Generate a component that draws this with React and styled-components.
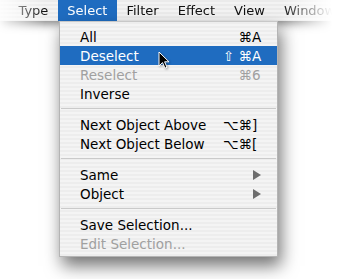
import styled, { createGlobalStyle } from "styled-components";

const GlobalStyle = createGlobalStyle`
  html, body {
    margin: 0;
    padding: 0;
    background: #fff;
  }
  body {
    font-family: "DejaVu Sans", "Liberation Sans", sans-serif;
  }
`;

const menuBarItems = ["Type", "Select", "Filter", "Effect", "View", "Window"];

const menuGroups = [
  [
    { label: "All", mods: "⌘", key: "A" },
    { label: "Deselect", mods: "⇧ ⌘", key: "A", active: true },
    { label: "Reselect", mods: "⌘", key: "6", disabled: true },
    { label: "Inverse" },
  ],
  [
    { label: "Next Object Above", mods: "⌥⌘", key: "]" },
    { label: "Next Object Below", mods: "⌥⌘", key: "[" },
  ],
  [
    { label: "Same", submenu: true },
    { label: "Object", submenu: true },
  ],
  [
    { label: "Save Selection..." },
    { label: "Edit Selection...", disabled: true },
  ],
];

const Arrow = () => (
  <svg width="12" height="19" viewBox="0 0 12 19">
    <path
      d="M1 1 L1 15 L4.5 11.6 L7 17.2 L9 16.3 L6.6 10.8 L11 10.8 Z"
      fill="#000"
      stroke="#fff"
      strokeWidth="1"
      strokeLinejoin="round"
    />
  </svg>
);

const App = () => {
  return (
    <Screen>
      <GlobalStyle />
      <BarFade>
        <MenuBar>
          {menuBarItems.map((item) => (
            <BarItem key={item} $open={item === "Select"}>
              {item}
            </BarItem>
          ))}
        </MenuBar>
      </BarFade>

      <Menu>
        {menuGroups.map((group, gi) => (
          <Group key={gi} $first={gi === 0}>
            {group.map((row) => (
              <Row key={row.label} $active={row.active} $disabled={row.disabled}>
                <Label>{row.label}</Label>
                {row.key && (
                  <Shortcut>
                    <Mods>{row.mods}</Mods>
                    <Key>{row.key}</Key>
                  </Shortcut>
                )}
                {row.submenu && <SubArrow />}
              </Row>
            ))}
          </Group>
        ))}
      </Menu>

      <Cursor>
        <Arrow />
      </Cursor>
    </Screen>
  );
};

export default App;

const Screen = styled.div`
  position: relative;
  width: 348px;
  height: 279px;
  overflow: hidden;
  background: #fff;
`;

const BarFade = styled.div`
  padding-bottom: 22px;
  -webkit-mask-image: linear-gradient(
    to right,
    rgba(0, 0, 0, 0.15) 0px,
    #000 45px,
    #000 282px,
    rgba(0, 0, 0, 0) 332px
  );
  mask-image: linear-gradient(
    to right,
    rgba(0, 0, 0, 0.15) 0px,
    #000 45px,
    #000 282px,
    rgba(0, 0, 0, 0) 332px
  );
`;

const MenuBar = styled.div`
  display: flex;
  align-items: stretch;
  height: 21px;
  padding-left: 9px;
  background: repeating-linear-gradient(
    to bottom,
    #ebebeb 0px,
    #ebebeb 2px,
    #f3f3f3 2px,
    #f3f3f3 4px
  );
  box-shadow: 0 3px 10px rgba(0, 0, 0, 0.5);
`;

const BarItem = styled.div`
  display: flex;
  align-items: center;
  padding: 0 9.5px 1px;
  font-size: 13px;
  white-space: nowrap;
  color: ${(p) => (p.$open ? "#fff" : "#111")};
  background: ${(p) => (p.$open ? "#1f6cc0" : "transparent")};
`;

const Menu = styled.div`
  position: absolute;
  left: 59px;
  top: 21px;
  width: 219px;
  padding: 5px 0 3px;
  box-sizing: border-box;
  background: repeating-linear-gradient(
    to bottom,
    #ededed 0px,
    #ededed 2px,
    #f4f4f4 2px,
    #f4f4f4 4px
  );
  border: 1px solid #b4b4b4;
  border-top-color: #c8c8c8;
  box-shadow: 3px 9px 16px rgba(0, 0, 0, 0.55);
`;

const Group = styled.div`
  ${(p) =>
    !p.$first &&
    `
    margin-top: 12px;
    position: relative;
    &::before {
      content: "";
      position: absolute;
      left: 1px;
      right: 1px;
      top: -7px;
      height: 1px;
      background: #cacaca;
    }
  `}
`;

const Row = styled.div`
  display: flex;
  align-items: center;
  height: 19px;
  padding: 0 14px 0 20px;
  font-size: 13.5px;
  color: ${(p) => (p.$active ? "#fff" : p.$disabled ? "#a0a0a0" : "#000")};
  background: ${(p) => (p.$active ? "#1f6cc0" : "transparent")};
`;

const Label = styled.span`
  flex: 1;
  white-space: nowrap;
`;

const Shortcut = styled.span`
  display: flex;
  align-items: center;
`;

const Mods = styled.span`
  text-align: right;
  white-space: pre;
`;

const Key = styled.span`
  width: 11px;
  text-align: left;
`;

const SubArrow = styled.span`
  width: 0;
  height: 0;
  margin-right: 2px;
  border-top: 5px solid transparent;
  border-bottom: 5px solid transparent;
  border-left: 8px solid #6d6d6d;
`;

const Cursor = styled.div`
  position: absolute;
  left: 158px;
  top: 51px;
  width: 12px;
  height: 19px;
  filter: drop-shadow(1px 1px 1px rgba(0, 0, 0, 0.35));
`;
